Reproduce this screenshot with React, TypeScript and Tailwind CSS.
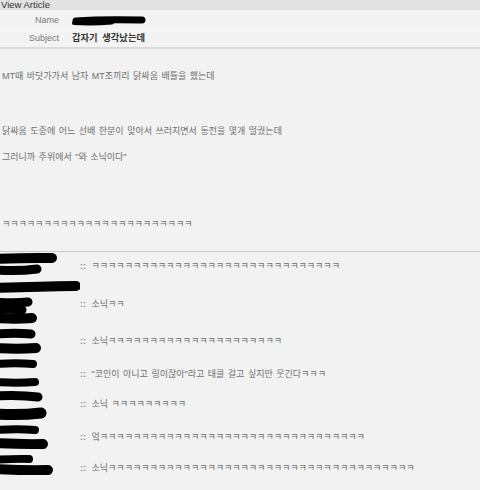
const comments = [
  { h: "h-[38px]", text: "ㅋ".repeat(30) },
  { h: "h-[37px]", text: "소닉ㅋㅋ" },
  { h: "h-[33px]", text: "소닉" + "ㅋ".repeat(21) },
  { h: "h-[30px]", text: '"코인이 아니고 링이잖아"라고 태클 걸고 싶지만 웃긴다ㅋㅋㅋ' },
  { h: "h-[33px]", text: "소닉 " + "ㅋ".repeat(9) },
  { h: "h-[31px]", text: "엌" + "ㅋ".repeat(32) },
  { h: "h-[30px]", text: "소닉" + "ㅋ".repeat(37) },
];

// marker strokes hiding the commenters' names
const strokes = [
  [0, 7, 52, 6, 10],
  [0, 18, 37, 17, 9],
  [0, 36, 76, 34, 10],
  [0, 50, 28, 50, 9],
  [0, 58, 22, 58, 9],
  [0, 66, 32, 66, 10],
  [0, 82, 31, 82, 9],
  [0, 96, 36, 96, 10],
  [0, 112, 33, 112, 8],
  [0, 130, 35, 130, 8],
  [0, 144, 38, 145, 9],
  [0, 162, 41, 161, 11],
  [0, 178, 35, 178, 8],
  [0, 191, 43, 192, 10],
  [0, 208, 29, 207, 8],
  [0, 217, 48, 218, 10],
];

function Redacted() {
  return (
    <svg width="80" height="232" viewBox="0 0 80 232">
      {strokes.map(([x1, y1, x2, y2, w], i) => (
        <path
          key={i}
          d={`M${x1 - 6} ${y1} Q${(x1 + x2) / 2} ${y1 + (i % 2 ? 1.5 : -1.5)} ${x2} ${y2}`}
          stroke="#000"
          strokeWidth={w}
          strokeLinecap="round"
          fill="none"
        />
      ))}
    </svg>
  );
}

export default function App() {
  return (
    <div className="w-[480px] h-[490px] overflow-hidden bg-[#f2f2f2] [font-family:'Liberation_Sans','Noto_Sans_CJK_KR',sans-serif]">
      <div className="h-[10px] bg-[#e2e2e2] border-b border-[#dcdcdc] px-[1px] text-[9.5px] leading-[10px] text-[#333]">
        View Article
      </div>

      <div className="border-b-2 border-[#d9d9d9]">
        <div className="flex h-[20px] items-center border-b border-[#f8f8f8] bg-[#f3f3f3]">
          <div className="w-[60px] pr-[1px] text-right text-[9px] leading-[20px] text-[#777]">Name</div>
          <div className="ml-[12px]">
            <svg width="74" height="10" viewBox="0 0 74 10" className="mt-[2px]">
              <path d="M4 5 Q30 3 70 4" stroke="#000" strokeWidth="7" strokeLinecap="round" fill="none" />
              <path d="M2 7 Q20 8 40 6.5" stroke="#000" strokeWidth="4" strokeLinecap="round" fill="none" />
            </svg>
          </div>
        </div>
        <div className="flex h-[17px] items-center bg-[#f3f3f3]">
          <div className="w-[60px] pr-[1px] text-right text-[9px] leading-[17px] text-[#777]">Subject</div>
          <div className="ml-[12px] text-[9.3px] font-bold leading-[17px] text-[#333] [word-spacing:2px]">
            갑자기 생각났는데
          </div>
        </div>
      </div>

      <div className="border-b border-[#c9c9c9] px-[2px] pt-[21px] pb-[21px] text-[9px] leading-[12px] text-[#6f6f6f] [word-spacing:1px]">
        <p>MT때 바닷가가서 남자 MT조끼리 닭싸움 배틀을 했는데</p>
        <p className="mt-[43px]">닭싸움 도중에 어느 선배 한분이 맞아서 쓰러지면서 동전을 몇개 떨궜는데</p>
        <p className="mt-[14px]">그러니까 주위에서 "와 소닉이다"</p>
        <p className="mt-[55px]">{"ㅋ".repeat(23)}</p>
      </div>

      <div className="flex">
        <div className="w-[80px] shrink-0">
          <Redacted />
        </div>
        <div className="flex-1">
          {comments.map((c, i) => (
            <div key={i} className={`${c.h} pt-[8px] text-[9px] leading-[12px] text-[#6f6f6f] [word-spacing:1px] whitespace-nowrap`}>
              <span className="mr-[2px] font-bold text-[#888]">::</span> {c.text}
            </div>
          ))}
        </div>
      </div>
    </div>
  );
}
